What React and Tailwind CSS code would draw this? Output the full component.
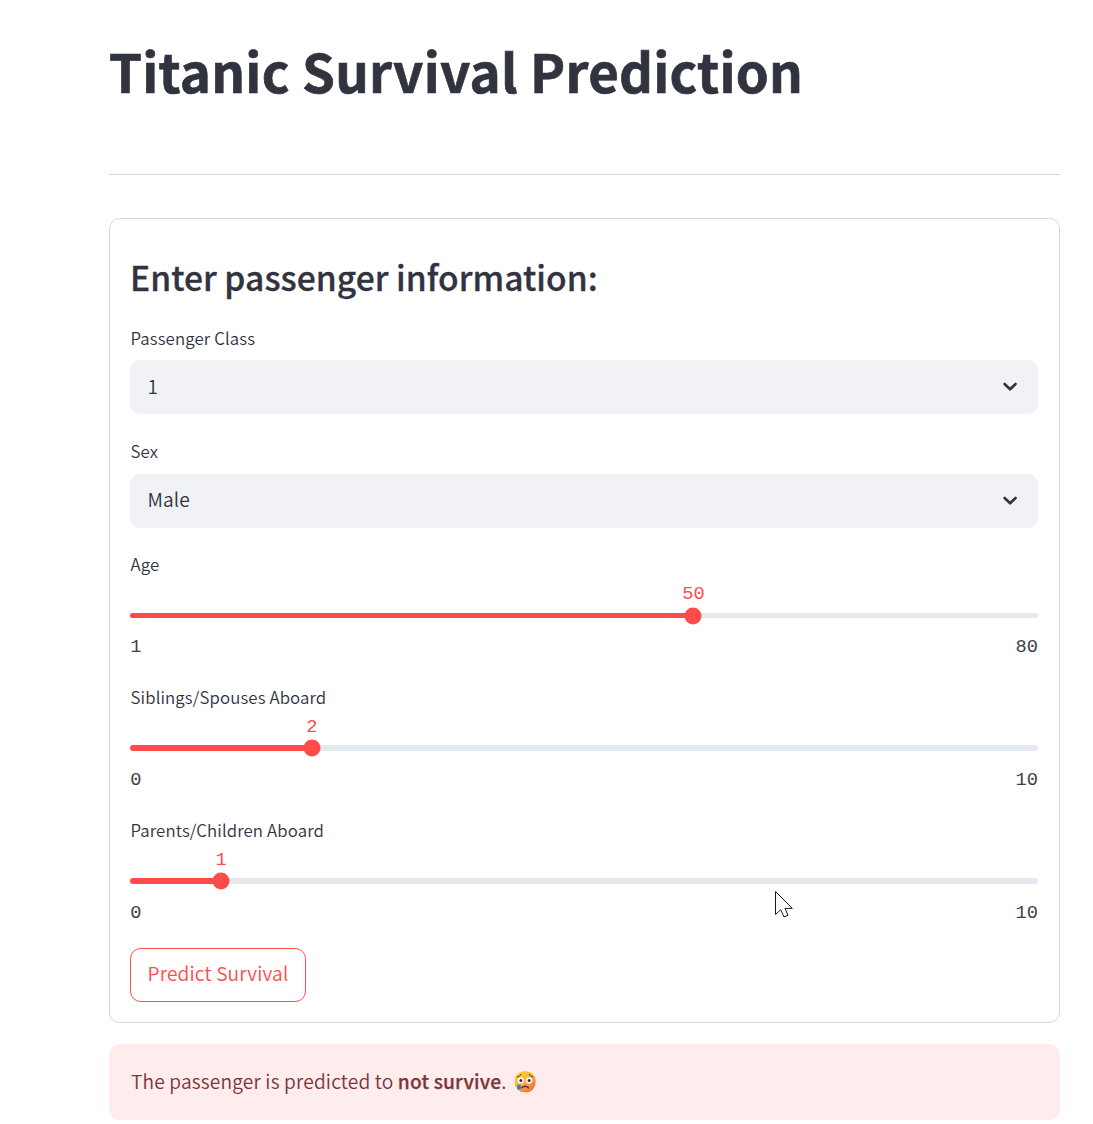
import React from "react";

const SANS = "font-['Noto_Sans_CJK_SC','Source_Sans_Pro',sans-serif]";

function Label({ children }) {
  return <div className="pl-[0.5px] text-[16.8px] leading-[26px] tracking-[0.13px] whitespace-nowrap">{children}</div>;
}

function SelectField({ label, value, className, valueClassName }) {
  return (
    <div className={`flex flex-col ${className}`}>
      <Label>{label}</Label>
      <div className="flex h-[54px] items-center justify-between rounded-[10.67px] bg-[#f0f2f6] pr-[17px] pl-[17.5px]">
        <span className={`text-[19.2px] leading-[28px] tracking-[0.1px] ${valueClassName}`}>{value}</span>
        <svg className="mb-px" width="21" height="21" viewBox="0 0 21 21" fill="none" stroke="#31333f" strokeWidth="2.6" strokeLinecap="round" strokeLinejoin="round">
          <path d="M4.6 8L10.1 13.3L15.6 8" />
        </svg>
      </div>
    </div>
  );
}

function SliderField({ label, value, min, max, trackClassName }) {
  const percent = ((value - min) / (max - min)) * 100;
  return (
    <div className="h-[133px]">
      <Label>{label}</Label>
      <div className="pt-[35px] font-['Liberation_Mono',monospace] text-[18.67px] leading-[22px] font-normal">
        <div className={`relative rounded-full bg-[#e4e8ef] ${trackClassName}`}>
          <div className="h-full rounded-full bg-[#ff4b4b]" style={{ width: `${percent}%` }} />
          <div className="absolute top-1/2 ml-[0.2px] size-[17px] -translate-x-1/2 -translate-y-1/2 rounded-full bg-[#ff4b4b]" style={{ left: `${percent}%` }} />
          <div className="absolute bottom-[13px] ml-[0.3px] -translate-x-1/2 text-[#ff4b4b]" style={{ left: `${percent}%` }}>{value}</div>
        </div>
        <div className="flex justify-between pt-[18px] pl-[0.3px] text-[#3d3f4a]">
          <span>{min}</span>
          <span>{max}</span>
        </div>
      </div>
    </div>
  );
}

function CryingFace() {
  return (
    <svg className="ml-[7px] size-[22px] shrink-0" viewBox="0 0 22 22">
      <defs>
        <linearGradient id="face" x1="0" y1="0" x2="0.8" y2="1">
          <stop offset="0" stopColor="#ffd43b" />
          <stop offset="0.55" stopColor="#fbb034" />
          <stop offset="1" stopColor="#e8694f" />
        </linearGradient>
      </defs>
      <rect x="0.6" y="0.2" width="21" height="21" rx="9.4" fill="url(#face)" />
      <path d="M3.2 5.9Q5.8 5.4 7 3.5M15.4 3.5Q16.6 5.4 19 5.9" fill="none" stroke="#7b4b2a" strokeWidth="1.1" strokeLinecap="round" />
      <circle cx="6.8" cy="9.4" r="3.1" fill="#fff" />
      <circle cx="15.2" cy="9.4" r="3.1" fill="#fff" />
      <circle cx="6.9" cy="9.5" r="1.5" fill="#38263c" />
      <circle cx="15.1" cy="9.5" r="1.5" fill="#38263c" />
      <path d="M7.8 16.8Q11 13.8 14.3 16.8" fill="none" stroke="#4d293d" strokeWidth="1.3" strokeLinecap="round" />
      <path d="M3.3 13.8h3.5v3.5q0 1.3-1.7 1.3t-1.8-1.3z" fill="#2878ef" />
    </svg>
  );
}

export default function App() {
  return (
    <div className={`relative h-[1124px] w-[1093px] overflow-hidden bg-white pr-[33px] pl-[109px] font-[350] text-[#31333f] ${SANS}`}>
      <h1 className="h-[174px] pt-[35px] text-[52.8px] leading-[70px] font-bold tracking-[0.25px] whitespace-nowrap [-webkit-text-stroke:0.7px_#31333f]">Titanic Survival Prediction</h1>
      <hr className="h-px border-0 bg-[#d6d6d9]" />
      <form className="mt-[43px] h-[805px] rounded-[10.67px] border border-[#d6d6d9] pr-[21px] pl-[20px]">
        <h2 className="h-[106px] pt-[35px] text-[33.6px] leading-[45px] font-medium tracking-[0.04px] whitespace-nowrap [-webkit-text-stroke:0.3px_#31333f]">Enter passenger information:</h2>
        <SelectField label="Passenger Class" value="1" className="h-[113px] gap-[9px]" valueClassName="pb-[3px]" />
        <SelectField label="Sex" value="Male" className="h-[113px] gap-[10px]" valueClassName="pb-[5px]" />
        <SliderField label="Age" value={50} min={1} max={80} trackClassName="mt-px h-[5px]" />
        <SliderField label="Siblings/Spouses Aboard" value={2} min={0} max={10} trackClassName="h-[6px]" />
        <SliderField label="Parents/Children Aboard" value={1} min={0} max={10} trackClassName="h-[6px]" />
        <button type="button" className="mt-[-2px] flex h-[54px] w-[176px] items-center justify-center rounded-[10.67px] border border-[#ff4b4b] pb-[4px] text-[19.2px] leading-[28px] tracking-[0.14px] whitespace-nowrap text-[#ff4b4b]">Predict Survival</button>
      </form>
      <div className="mt-[21px] flex h-[76px] items-center rounded-[10.67px] bg-[#ffecec] px-[22px] text-[#7d353b]">
        <p className="pb-[3px] text-[19.2px] leading-[28px] tracking-[0.14px] whitespace-nowrap">The passenger is predicted to <strong className="font-medium [-webkit-text-stroke:0.25px_#7d353b]">not survive</strong>.</p>
        <CryingFace />
      </div>
      <svg className="absolute top-[890px] left-[774px] h-[29px] w-[20px]" viewBox="0 0 20 29">
        <path d="M1.5 1.5V24.5L6.7 19.7L10 27L14 25.3L11 18.4H18.3Z" fill="#fff" stroke="#17172a" strokeWidth="1" />
      </svg>
    </div>
  );
}
